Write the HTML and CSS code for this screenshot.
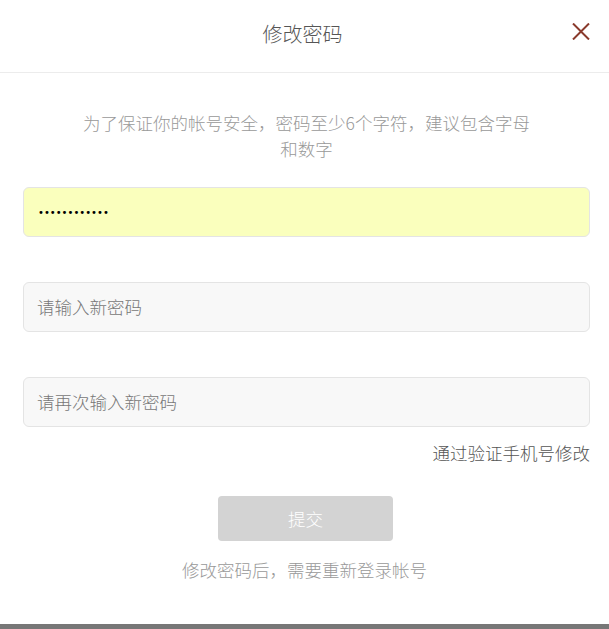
FILE: index.html
```html
<!DOCTYPE html>
<html lang="zh-CN">
<head>
<meta charset="utf-8">
<title>修改密码</title>
<link rel="stylesheet" href="styles.css">
</head>
<body>
<div class="modal">
  <header class="head">
    <h1 class="title">修改密码</h1>
    <button class="close" aria-label="关闭">
      <svg width="18" height="17" viewBox="0 0 18 17"><path d="M1 0.5 L17 16.5 M17 0.5 L1 16.5" stroke="#8a3a2c" stroke-width="2" fill="none"/></svg>
    </button>
  </header>
  <main class="body">
    <p class="tip">为了保证你的帐号安全，密码至少6个字符，建议包含字母和数字</p>
    <div class="field filled"><span class="dots">••••••••••••</span></div>
    <div class="field"><span class="ph">请输入新密码</span></div>
    <div class="field"><span class="ph">请再次输入新密码</span></div>
    <div class="link-row"><a class="link">通过验证手机号修改</a></div>
    <div class="actions"><button class="submit">提交</button></div>
    <p class="note">修改密码后，需要重新登录帐号</p>
  </main>
</div>
<div class="bar"></div>
</body>
</html>
```
FILE: styles.css
```css
html, body {
  margin: 0;
  padding: 0;
  background: #fff;
  font-family: "Noto Sans CJK SC", "Noto Sans", sans-serif;
  font-weight: 300;
}
body {
  width: 609px;
  height: 629px;
  display: flex;
  flex-direction: column;
  overflow: hidden;
}
.modal {
  flex: 1;
}
.head {
  position: relative;
  height: 72px;
  border-bottom: 1px solid #ececec;
  display: flex;
  align-items: center;
  justify-content: center;
}
.title {
  margin: 0;
  margin-top: -5px;
  font-size: 20px;
  font-weight: 300;
  color: #555;
  padding-right: 4px;
}
.close {
  position: absolute;
  right: 19px;
  top: 23px;
  padding: 0;
  border: 0;
  background: none;
  display: block;
  line-height: 0;
}
.body {
  padding: 0 19px 0 23px;
  display: flex;
  flex-direction: column;
}
.tip {
  margin: 37px auto 0;
  width: 452px;
  text-align: center;
  font-size: 17.5px;
  line-height: 26px;
  color: #999;
}
.field {
  box-sizing: border-box;
  height: 50px;
  border: 1px solid #e4e4e4;
  border-radius: 6px;
  background: #f8f8f8;
  display: flex;
  align-items: center;
  padding-left: 13px;
  margin-top: 45px;
}
.field.filled {
  margin-top: 25px;
  background: #faffbd;
}
.dots {
  font-size: 10px;
  color: #000;
  font-family: "DejaVu Sans", sans-serif;
  font-weight: normal;
  padding-left: 1px;
}
.ph {
  font-size: 17.5px;
  color: #777;
  margin-top: -2px;
}
.link-row {
  display: flex;
  justify-content: flex-end;
  margin-top: 13px;
}
.link {
  font-size: 17.5px;
  color: #555;
  line-height: 26px;
}
.actions {
  display: flex;
  justify-content: center;
  margin-top: 30px;
  padding-right: 2px;
}
.submit {
  width: 175px;
  height: 45px;
  border: 0;
  border-radius: 4px;
  background: #d3d3d3;
  color: #fff;
  font-family: inherit;
  font-weight: 300;
  font-size: 17.5px;
}
.note {
  margin: 16px 0 0;
  text-align: center;
  font-size: 17.5px;
  line-height: 26px;
  color: #999;
  padding-right: 4px;
}
.bar {
  height: 5px;
  background: #777;
}
```
